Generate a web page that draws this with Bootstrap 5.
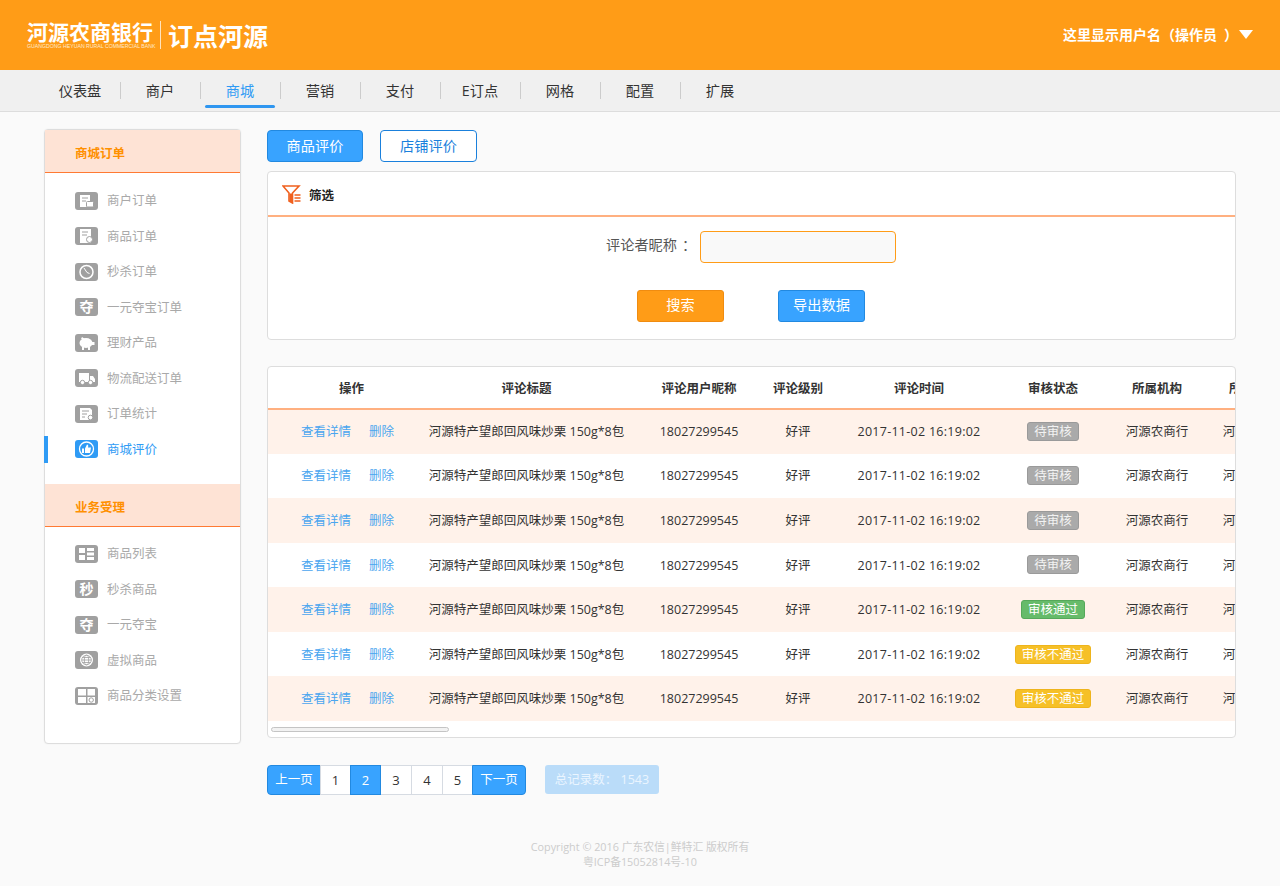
<!DOCTYPE html>
<html lang="zh">
<head>
<meta charset="utf-8">
<title>订点河源</title>
<link href="https://cdn.jsdelivr.net/npm/bootstrap@5.3.0/dist/css/bootstrap.min.css" rel="stylesheet">
<style>
body{background:#fafafa;font-family:"Open Sans","Noto Sans CJK SC",sans-serif;font-size:12.5px;color:#333;height:886px;overflow:hidden}
.top-bar{height:70px;background:#ff9c17;padding:0 27px 0 27px;color:#fff}
.logo-left{margin-top:-1px}
.logo-stack{width:126px;flex:none}
.logo-a{font-size:21px;font-weight:700;line-height:23px;width:126px;white-space:nowrap;font-family:"Noto Sans CJK SC",sans-serif}
.logo-en{font-size:5.2px;line-height:6px;white-space:nowrap;font-family:"Liberation Sans",sans-serif;color:#ffe9cc}
.logo-sep{width:1px;height:28px;background:#ffe3bd;margin:0 7px}
.logo-b{font-size:25px;font-weight:700;line-height:28px;letter-spacing:0;white-space:nowrap;font-family:"Noto Sans CJK SC",sans-serif}
.user-name{font-size:14px;font-weight:700;margin-right:8px;white-space:nowrap;margin-top:-2px}
.par-shift{margin-left:7px;margin-right:-7px}
.col-shift{margin-left:5px;margin-right:-5px}
.caret-dn{width:14px;height:9px;margin-top:-1px}
.main-nav{height:42px;background:#f0f0f0;border-bottom:1px solid #ddd;padding-left:40px}
.main-nav .nav-link{width:80px;height:41px;padding:0;color:#333;font-size:14.2px;line-height:41px;text-align:center;position:relative}
.main-nav .nav-item+.nav-item .nav-link::before{content:"";position:absolute;left:0;top:12px;height:17px;width:1px;background:#ccc}
.main-nav .nav-link.active{color:#2f9bf5}
.main-nav .nav-link.active::after{content:"";position:absolute;left:5px;right:5px;top:35px;height:3px;border-radius:2px;background:#2f96f0}
.content-wrap{padding:17px 0 0 44px;gap:26px}
.side-box{width:197px;height:615px;background:#fff;border:1px solid #ddd;border-radius:4px;box-shadow:0 0 2px rgba(0,0,0,.05)}
.side-head{height:43px;background:#fee3d5;border-bottom:1px solid #ff7a33;padding:6px 0 0 30px;color:#ff9000;font-weight:700;font-size:12.5px;line-height:36px;box-shadow:0 1px 0 #fff}
.side-list{padding:10px 0 17px}
.side-list.second{padding-top:9px}
.side-item{height:35.5px;color:#a9a9a9;font-size:12.5px;background:transparent;border:0;padding:0;border-radius:0}
.side-mark{width:4px;height:27px;margin:0 27px 0 -1px;flex:none}
.side-item svg{margin-right:9px;flex:none}
.side-txt{padding-top:2px}
.side-item.on{color:#2f9bf5}
.side-item.on .side-mark{background:#2f9bf5}
.main-col{width:969px}
.tab-btn{width:96px;height:32px;padding:0;font-size:14.2px;line-height:30px;border-radius:4px;--bs-btn-bg:#38a3ff;--bs-btn-border-color:#2289e0;--bs-btn-color:#fff}
.tab-btn.plain{width:97px;margin-left:17px;--bs-btn-bg:#fff;--bs-btn-border-color:#1a80dc;--bs-btn-color:#1a80dc}
.tab-row{margin-top:1px}
.panel-box{background:#fff;border:1px solid #ddd;border-radius:4px;box-shadow:none}
.filter-box{height:169px;margin-top:9px}
.filter-head{height:45px;border-bottom:2px solid #ffb080;padding:2px 0 0 14px;font-weight:700;font-size:12.5px;color:#222}
.filter-head svg{margin-right:8px}
.filter-txt{padding-top:4px}
.filter-body{padding:14px 0 0}
.field-row{height:32px;padding-left:338px}
.field-label{width:94px;font-size:14.2px;color:#555;white-space:nowrap;margin-bottom:4px}
.field-input{width:196px;height:32px;background:#f9f9f9;border:1px solid #ff9c17;border-radius:4px}
.act-row{margin-top:27px;padding-left:369px;gap:54px}
.act-btn{width:87px;height:32px;padding:0 0 2px;font-size:14.2px;line-height:28px;border-radius:3px;--bs-btn-color:#fff}
.act-orange{--bs-btn-bg:#ff9c17;--bs-btn-border-color:#f08c10}
.act-blue{--bs-btn-bg:#38a3ff;--bs-btn-border-color:#2289e0}
.table-box{height:372px;margin-top:26px;overflow:hidden}
.rev-table{table-layout:fixed;width:1018px;max-width:none;margin:0;font-size:12.5px;--bs-table-bg:transparent;--bs-table-border-color:transparent;color:#333}
.rev-col-a{width:159px}.rev-col-b{width:199px}.rev-col-c{width:146px}.rev-col-d{width:52px}.rev-col-e{width:190px}.rev-col-f{width:78px}.rev-col-g{width:130px}.rev-col-h{width:64px}
.rev-table th{height:42px;padding:4px 0 0;text-align:center;vertical-align:middle;font-weight:700;color:#333;border-bottom:2px solid #ffb080;font-size:12.5px;white-space:nowrap}
.rev-table th:first-child{padding-left:8px}
.rev-table td{height:44.57px;padding:2px 0 0;text-align:center;vertical-align:middle;white-space:nowrap;border:0}
.rev-table tbody tr:nth-child(odd) td{background:#fff2ea}
.rev-table a{color:#4ba6ef;text-decoration:none}
.rev-table a+a{margin-left:18px}
.rev-table .time-cell{letter-spacing:.27px}
.state-tag{font-size:12.5px;font-weight:400;line-height:17px;padding:0 6px;border-radius:3px;border:1px solid;color:#fff;vertical-align:middle;margin-bottom:2px}
.st-wait{background:#aaa;border-color:#9a9a9a;color:#f2f2f2}
.st-ok{background:#66bb6a;border-color:#55a85a}
.st-no{background:#f6c027;border-color:#eeb41c}
.scroll-area{height:17px;padding:6px 0 0 3px}
.scroll-thumb{width:178px;height:5px;background:#f2f2f2;border:1px solid #c4c4c4;border-radius:3px}
.pager-row{margin-top:27px}
.pager{--bs-pagination-padding-x:0;--bs-pagination-padding-y:0;--bs-pagination-font-size:13px;--bs-pagination-color:#333;--bs-pagination-border-color:#d6dbe2;--bs-pagination-active-bg:#38a3ff;--bs-pagination-active-border-color:#2289e0;--bs-pagination-border-radius:4px}
.pager .page-link{height:30px;width:31px;line-height:28px;text-align:center;font-size:13px}
.pager .page-item:nth-child(4) .page-link,.pager .page-item:nth-child(5) .page-link{width:32px}
.pager .wide .page-link{width:54px;background:#38a3ff;color:#fff;border-color:#2289e0;font-size:12.5px}
.total-tag{margin-left:19px;width:114px;height:29px;line-height:29px;background:#badcf9;color:#eaf5ff;border-radius:3px;text-align:center;font-size:12.5px}
.foot-note{width:1280px;margin-left:-267px;margin-top:44px;text-align:center;color:#ccc;font-size:10.8px;line-height:15px}
</style>
</head>
<body>
<header class="top-bar d-flex justify-content-between align-items-center">
  <div class="d-flex align-items-center logo-left">
    <div class="logo-stack">
      <div class="logo-a">河源农商银行</div>
      <div class="logo-en">GUANGDONG HEYUAN RURAL COMMERCIAL BANK</div>
    </div>
    <div class="logo-sep"></div>
    <div class="logo-b">订点河源</div>
  </div>
  <div class="d-flex align-items-center">
    <span class="user-name">这里显示用户名（操作员<span class="par-shift">）</span></span>
    <svg class="caret-dn" viewBox="0 0 14 9"><path d="M0 0h14L7 9z" fill="#fff"/></svg>
  </div>
</header>
<ul class="nav main-nav">
  <li class="nav-item"><a class="nav-link" href="#">仪表盘</a></li>
  <li class="nav-item"><a class="nav-link" href="#">商户</a></li>
  <li class="nav-item"><a class="nav-link active" href="#">商城</a></li>
  <li class="nav-item"><a class="nav-link" href="#">营销</a></li>
  <li class="nav-item"><a class="nav-link" href="#">支付</a></li>
  <li class="nav-item"><a class="nav-link" href="#">E订点</a></li>
  <li class="nav-item"><a class="nav-link" href="#">网格</a></li>
  <li class="nav-item"><a class="nav-link" href="#">配置</a></li>
  <li class="nav-item"><a class="nav-link" href="#">扩展</a></li>
</ul>
<div class="d-flex align-items-start content-wrap">
  <aside class="side-box">
    <div class="side-head">商城订单</div>
    <div class="list-group side-list">
      <a class="list-group-item side-item d-flex align-items-center" href="#"><span class="side-mark"></span>
        <svg width="23" height="18" viewBox="0 0 23 18"><rect width="23" height="18" rx="3" fill="#a0a0a0"/><path d="M5 3h10v12H5z" fill="#fff"/><path d="M7 6h6M7 9h4" stroke="#a0a0a0"/><rect x="11.500" y="9.500" width="7" height="5.500" rx="1" fill="#fff" stroke="#a0a0a0"/></svg><span class="side-txt">商户订单</span></a>
      <a class="list-group-item side-item d-flex align-items-center" href="#"><span class="side-mark"></span>
        <svg width="23" height="18" viewBox="0 0 23 18"><rect width="23" height="18" rx="3" fill="#a0a0a0"/><path d="M5 2h11v14H5z" fill="#fff"/><path d="M7 5h6M7 8h5" stroke="#a0a0a0"/><circle cx="14.500" cy="12.500" r="3" fill="#fff" stroke="#a0a0a0"/></svg><span class="side-txt">商品订单</span></a>
      <a class="list-group-item side-item d-flex align-items-center" href="#"><span class="side-mark"></span>
        <svg width="23" height="18" viewBox="0 0 23 18"><rect width="23" height="18" rx="3" fill="#a0a0a0"/><circle cx="11.500" cy="9" r="6.500" fill="none" stroke="#fff" stroke-width="1.500"/><path d="M9 5l3 4.500 2.500 1" fill="none" stroke="#fff"/></svg><span class="side-txt">秒杀订单</span></a>
      <a class="list-group-item side-item d-flex align-items-center" href="#"><span class="side-mark"></span>
        <svg width="23" height="18" viewBox="0 0 23 18"><rect width="23" height="18" rx="3" fill="#a0a0a0"/><text x="11.500" y="14" text-anchor="middle" font-size="14" font-weight="700" fill="#fff" font-family="Noto Sans CJK SC">夺</text></svg><span class="side-txt">一元夺宝订单</span></a>
      <a class="list-group-item side-item d-flex align-items-center" href="#"><span class="side-mark"></span>
        <svg width="23" height="18" viewBox="0 0 23 18"><rect width="23" height="18" rx="3" fill="#a0a0a0"/><ellipse cx="11" cy="9" rx="6.500" ry="5" fill="#fff"/><path d="M6 5l1-2 3 2zM7 13h2v3H7zM13 13h2v3h-2zM17 8h2.500v3H17z" fill="#fff"/></svg><span class="side-txt">理财产品</span></a>
      <a class="list-group-item side-item d-flex align-items-center" href="#"><span class="side-mark"></span>
        <svg width="23" height="18" viewBox="0 0 23 18"><rect width="23" height="18" rx="3" fill="#a0a0a0"/><path d="M4 4h10v9H4zM15 7h3l2 3v3h-5z" fill="#fff"/><circle cx="7.500" cy="13.500" r="2.200" fill="#fff" stroke="#a0a0a0"/><circle cx="15.500" cy="13.500" r="2.200" fill="#fff" stroke="#a0a0a0"/></svg><span class="side-txt">物流配送订单</span></a>
      <a class="list-group-item side-item d-flex align-items-center" href="#"><span class="side-mark"></span>
        <svg width="23" height="18" viewBox="0 0 23 18"><rect width="23" height="18" rx="3" fill="#a0a0a0"/><path d="M5 3h10l2 2v10H5z" fill="#fff"/><path d="M7 6h7M7 9h5M7 12h3" stroke="#a0a0a0"/><circle cx="15.500" cy="12.500" r="2.300" fill="#fff" stroke="#a0a0a0"/></svg><span class="side-txt">订单统计</span></a>
      <a class="list-group-item side-item on d-flex align-items-center" href="#"><span class="side-mark"></span>
        <svg width="23" height="18" viewBox="0 0 23 18"><rect width="23" height="18" rx="3" fill="#2f9bf5"/><circle cx="11.500" cy="9" r="7" fill="none" stroke="#fff" stroke-width="1.300"/><path d="M7 8.500h2V13H7zM10 8.500l2-4c1 0 1.500 1 1.200 2L13 7.500h3l-1 5.500h-5z" fill="#fff"/></svg><span class="side-txt">商城评价</span></a>
    </div>
    <div class="side-head">业务受理</div>
    <div class="list-group side-list second">
      <a class="list-group-item side-item d-flex align-items-center" href="#"><span class="side-mark"></span>
        <svg width="23" height="18" viewBox="0 0 23 18"><rect width="23" height="18" rx="3" fill="#a0a0a0"/><path d="M4 3h6v5H4zM4 10h6v5H4zM12 3h7v3h-7zM12 7.500h7v3h-7zM12 12h7v3h-7z" fill="#fff"/></svg><span class="side-txt">商品列表</span></a>
      <a class="list-group-item side-item d-flex align-items-center" href="#"><span class="side-mark"></span>
        <svg width="23" height="18" viewBox="0 0 23 18"><rect width="23" height="18" rx="3" fill="#a0a0a0"/><text x="11.500" y="14" text-anchor="middle" font-size="14" font-weight="700" fill="#fff" font-family="Noto Sans CJK SC">秒</text></svg><span class="side-txt">秒杀商品</span></a>
      <a class="list-group-item side-item d-flex align-items-center" href="#"><span class="side-mark"></span>
        <svg width="23" height="18" viewBox="0 0 23 18"><rect width="23" height="18" rx="3" fill="#a0a0a0"/><text x="11.500" y="14" text-anchor="middle" font-size="14" font-weight="700" fill="#fff" font-family="Noto Sans CJK SC">夺</text></svg><span class="side-txt">一元夺宝</span></a>
      <a class="list-group-item side-item d-flex align-items-center" href="#"><span class="side-mark"></span>
        <svg width="23" height="18" viewBox="0 0 23 18"><rect width="23" height="18" rx="3" fill="#a0a0a0"/><circle cx="11.500" cy="9" r="6.500" fill="#fff"/><g fill="none" stroke="#a0a0a0" stroke-width=".8"><circle cx="11.500" cy="9" r="4.800"/><ellipse cx="11.500" cy="9" rx="2.200" ry="4.800"/><path d="M6.700 9h9.600M7.500 6.500h8M7.500 11.500h8"/></g></svg><span class="side-txt">虚拟商品</span></a>
      <a class="list-group-item side-item d-flex align-items-center" href="#"><span class="side-mark"></span>
        <svg width="23" height="18" viewBox="0 0 23 18"><rect width="23" height="18" rx="3" fill="#a0a0a0"/><path d="M3 2h8v6.500H3zM12.500 2H20v6.500h-7.500zM3 10h8v6H3zM12.500 10H20v6h-7.500z" fill="#fff"/><circle cx="16.200" cy="13" r="2.200" fill="none" stroke="#a0a0a0" stroke-width="1"/></svg><span class="side-txt">商品分类设置</span></a>
    </div>
  </aside>
  <main class="main-col">
    <div class="d-flex tab-row">
      <button class="btn tab-btn" type="button">商品评价</button>
      <button class="btn tab-btn plain" type="button">店铺评价</button>
    </div>
    <section class="panel-box filter-box">
      <div class="filter-head d-flex align-items-center">
        <svg width="19" height="19" viewBox="0 0 19 19"><path d="M1 1h16l-6.500 7v10L7 16V8z" fill="none" stroke="#f0601e" stroke-width="1.600"/><path d="M7.500 8.500h3v9L7.500 16z" fill="#f0601e"/><path d="M12.500 10h6M12.500 13h6M12.500 16h6" stroke="#f0601e" stroke-width="1.300"/></svg><span class="filter-txt">筛选</span></div>
      <div class="filter-body">
        <div class="field-row d-flex align-items-center">
          <label class="field-label" for="nick">评论者昵称<span class="col-shift">：</span></label>
          <input id="nick" class="form-control field-input" type="text">
        </div>
        <div class="act-row d-flex">
          <button class="btn act-btn act-orange" type="button">搜索</button>
          <button class="btn act-btn act-blue" type="button">导出数据</button>
        </div>
      </div>
    </section>
    <section class="panel-box table-box">
      <table class="table rev-table">
        <colgroup><col class="rev-col-a"><col class="rev-col-b"><col class="rev-col-c"><col class="rev-col-d"><col class="rev-col-e"><col class="rev-col-f"><col class="rev-col-g"><col class="rev-col-h"></colgroup>
        <thead><tr><th>操作</th><th>评论标题</th><th>评论用户昵称</th><th>评论级别</th><th>评论时间</th><th>审核状态</th><th>所属机构</th><th>所属机构</th></tr></thead>
        <tbody>
          <tr><td><a href="#">查看详情</a><a href="#">删除</a></td><td>河源特产望郎回风味炒栗 150g*8包</td><td>18027299545</td><td>好评</td><td class="time-cell">2017-11-02 16:19:02</td><td><span class="badge state-tag st-wait">待审核</span></td><td>河源农商行</td><td>河源农商行</td></tr>
          <tr><td><a href="#">查看详情</a><a href="#">删除</a></td><td>河源特产望郎回风味炒栗 150g*8包</td><td>18027299545</td><td>好评</td><td class="time-cell">2017-11-02 16:19:02</td><td><span class="badge state-tag st-wait">待审核</span></td><td>河源农商行</td><td>河源农商行</td></tr>
          <tr><td><a href="#">查看详情</a><a href="#">删除</a></td><td>河源特产望郎回风味炒栗 150g*8包</td><td>18027299545</td><td>好评</td><td class="time-cell">2017-11-02 16:19:02</td><td><span class="badge state-tag st-wait">待审核</span></td><td>河源农商行</td><td>河源农商行</td></tr>
          <tr><td><a href="#">查看详情</a><a href="#">删除</a></td><td>河源特产望郎回风味炒栗 150g*8包</td><td>18027299545</td><td>好评</td><td class="time-cell">2017-11-02 16:19:02</td><td><span class="badge state-tag st-wait">待审核</span></td><td>河源农商行</td><td>河源农商行</td></tr>
          <tr><td><a href="#">查看详情</a><a href="#">删除</a></td><td>河源特产望郎回风味炒栗 150g*8包</td><td>18027299545</td><td>好评</td><td class="time-cell">2017-11-02 16:19:02</td><td><span class="badge state-tag st-ok">审核通过</span></td><td>河源农商行</td><td>河源农商行</td></tr>
          <tr><td><a href="#">查看详情</a><a href="#">删除</a></td><td>河源特产望郎回风味炒栗 150g*8包</td><td>18027299545</td><td>好评</td><td class="time-cell">2017-11-02 16:19:02</td><td><span class="badge state-tag st-no">审核不通过</span></td><td>河源农商行</td><td>河源农商行</td></tr>
          <tr><td><a href="#">查看详情</a><a href="#">删除</a></td><td>河源特产望郎回风味炒栗 150g*8包</td><td>18027299545</td><td>好评</td><td class="time-cell">2017-11-02 16:19:02</td><td><span class="badge state-tag st-no">审核不通过</span></td><td>河源农商行</td><td>河源农商行</td></tr>
        </tbody>
      </table>
      <div class="scroll-area"><div class="scroll-thumb"></div></div>
    </section>
    <div class="d-flex align-items-start pager-row">
      <ul class="pagination pager mb-0">
        <li class="page-item wide"><a class="page-link" href="#">上一页</a></li>
        <li class="page-item"><a class="page-link" href="#">1</a></li>
        <li class="page-item active"><a class="page-link" href="#">2</a></li>
        <li class="page-item"><a class="page-link" href="#">3</a></li>
        <li class="page-item"><a class="page-link" href="#">4</a></li>
        <li class="page-item"><a class="page-link" href="#">5</a></li>
        <li class="page-item wide"><a class="page-link" href="#">下一页</a></li>
      </ul>
      <div class="total-tag">总记录数： 1543</div>
    </div>
    <footer class="foot-note">Copyright © 2016 广东农信|鲜特汇 版权所有<br>粤ICP备15052814号-10</footer>
  </main>
</div>
<script src="https://cdn.jsdelivr.net/npm/bootstrap@5.3.0/dist/js/bootstrap.bundle.min.js"></script>
</body>
</html>
